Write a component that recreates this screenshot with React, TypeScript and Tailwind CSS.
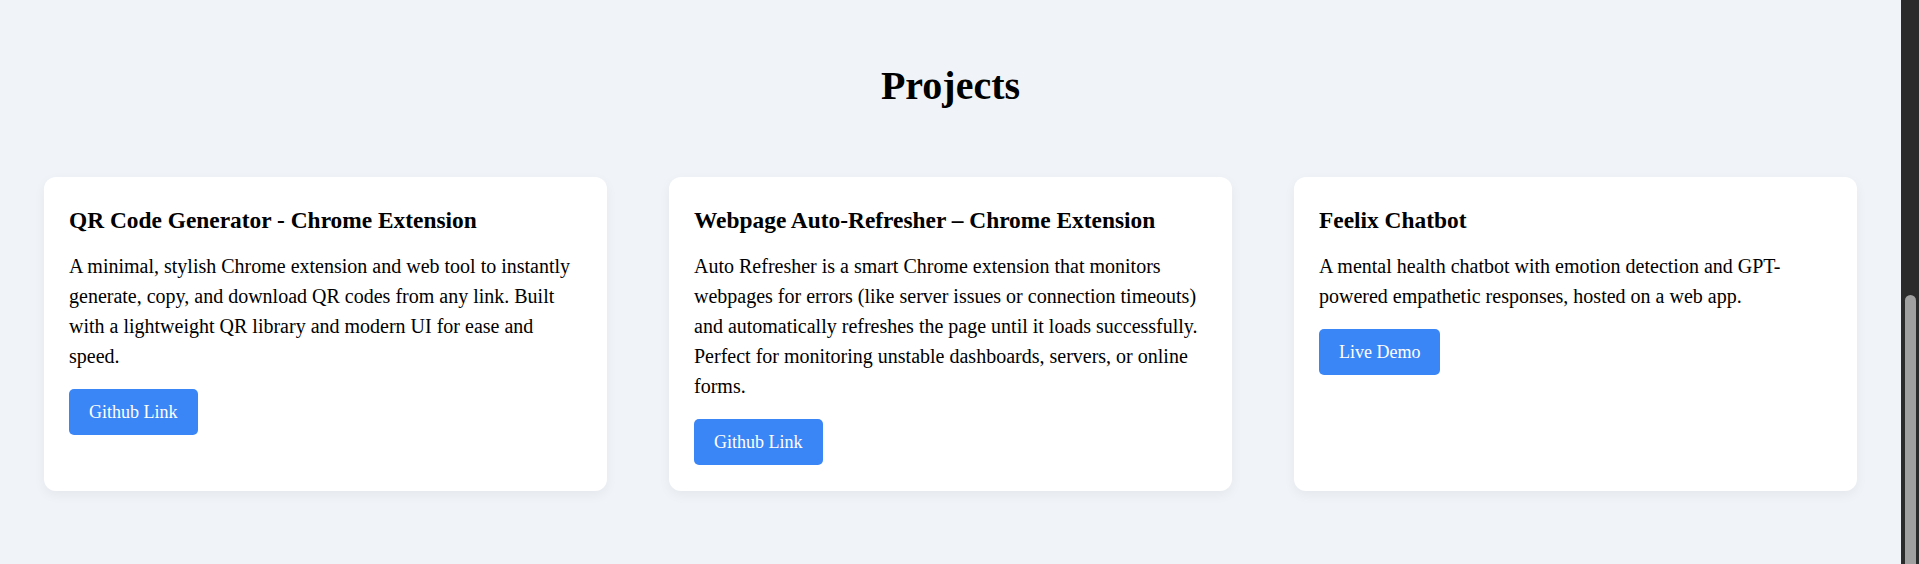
const projects = [
  {
    title: "QR Code Generator - Chrome Extension",
    desc: "A minimal, stylish Chrome extension and web tool to instantly generate, copy, and download QR codes from any link. Built with a lightweight QR library and modern UI for ease and speed.",
    link: "Github Link",
  },
  {
    title: "Webpage Auto-Refresher – Chrome Extension",
    desc: "Auto Refresher is a smart Chrome extension that monitors webpages for errors (like server issues or connection timeouts) and automatically refreshes the page until it loads successfully. Perfect for monitoring unstable dashboards, servers, or online forms.",
    link: "Github Link",
  },
  {
    title: "Feelix Chatbot",
    desc: "A mental health chatbot with emotion detection and GPT-powered empathetic responses, hosted on a web app.",
    link: "Live Demo",
  },
]

export default function App() {
  return (
    <div className="flex h-[564px] w-full overflow-hidden bg-[#f0f4f8] font-['Liberation_Serif',serif] text-black">
      <section className="flex-1 px-[44px] pt-[63px]">
        <h2 className="text-center text-[40px] font-bold leading-[46px]">Projects</h2>

        <div className="mt-[68px] grid grid-cols-3 gap-[62px]">
          {projects.map(item => (
            <div
              key={item.title}
              className="flex flex-col items-start rounded-[12px] bg-white px-[25px] pt-[30px] pb-[26px] shadow-[0_4px_12px_rgba(0,0,0,0.05)]"
            >
              <h3 className="text-[23.4px] font-bold leading-[27px]">{item.title}</h3>
              <p className="mt-[17px] text-[20px] leading-[30px]">{item.desc}</p>
              <a
                href="#"
                className="mt-[18px] rounded-[5px] bg-[#3b86f7] px-[20px] py-[12px] text-[18px] leading-[22px] text-white"
              >
                {item.link}
              </a>
            </div>
          ))}
        </div>
      </section>

      <div className="flex w-[18px] shrink-0 justify-center bg-[#2b2b2b] pt-[295px]">
        <div className="h-full w-[11px] rounded-t-full bg-[#a0a0a0]" />
      </div>
    </div>
  )
}
